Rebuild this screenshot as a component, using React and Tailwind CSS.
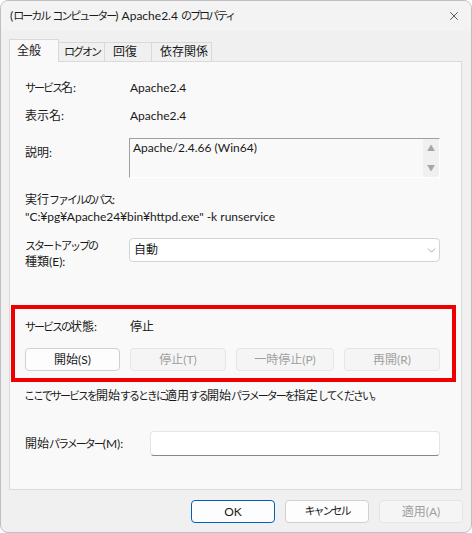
import { ChevronDown, X } from "lucide-react";

// Yu Gothic UI has narrow kana; Noto CJK's are full width, so tighten kana runs
const jp = (s) =>
  s.split(/([\u3040-\u30ff]+|¥)/).map((p, i) =>
    /^[\u3040-\u30ff]+$/.test(p) ? (
      <span key={i} className="text-[11px] tracking-[-2px]">
        {p}
      </span>
    ) : p === "¥" ? (
      <span key={i} className="font-['Liberation_Sans',sans-serif]">
        ¥
      </span>
    ) : (
      p
    )
  );

const Tab = ({ label, active, w, pl }) => (
  <div
    className={
      "whitespace-nowrap " +
      (active
        ? "relative z-10 -mb-px h-[23px] border border-b-0 border-[#d9d9d9] bg-[#f9f9f9] leading-[22px]"
        : "mt-[3px] h-[19px] border border-l-0 border-b-0 border-[#d9d9d9] bg-[#f0f0f0] leading-[18px]")
    }
    style={{ width: w, paddingLeft: pl }}
  >
    {jp(label)}
  </div>
);

const Btn = ({ label, w, disabled, primary }) => (
  <div
    className={
      "flex h-[23px] items-center justify-center whitespace-nowrap rounded-[4px] border " +
      (disabled
        ? "border-[#e5e5e5] bg-[#f5f5f5] text-[#a0a0a0]"
        : primary
        ? "border-[#005fb8] bg-[#fdfdfd] text-[#1a1a1a]"
        : "border-[#d0d0d0] bg-[#fdfdfd] text-[#1a1a1a]")
    }
    style={{ width: w }}
  >
    {jp(label)}
  </div>
);

export default function App() {
  return (
    <div className="h-[533px] w-[472px] overflow-hidden rounded-lg border border-[#bfbfbf] bg-[#f0f0f0] font-['Lato','Noto_Sans_CJK_JP',sans-serif] text-[12px] text-[#1a1a1a]">
      {/* title bar */}
      <div className="flex h-[30px] items-center justify-between bg-[#f3f3f3] pl-[9px] pr-[10px]">
        <span className="whitespace-nowrap">{jp("(ローカル コンピューター) Apache2.4 のプロパティ")}</span>
        <X size={14} strokeWidth={1.2} className="text-[#1a1a1a]" />
      </div>

      <div className="px-[8px] pt-[8px]">
        {/* tabs */}
        <div className="flex h-[22px] items-end">
          <Tab label="全般" active w={50} pl={7} />
          <Tab label="ログオン" w={46} pl={5} />
          <Tab label="回復" w={47} pl={8} />
          <Tab label="依存関係" w={60} pl={8} />
        </div>

        {/* panel */}
        <div className="h-[429px] w-[453px] border border-[#dadada] bg-[#f9f9f9]">
          <div className="pl-[15px]">
            <div className="mt-[16px] flex h-[20px] items-center">
              <span className="w-[105px]">{jp("サービス名:")}</span>
              <span>Apache2.4</span>
            </div>
            <div className="mt-[8px] flex h-[20px] items-center">
              <span className="w-[105px]">表示名:</span>
              <span>Apache2.4</span>
            </div>
            <div className="mt-[12px] flex">
              <span className="w-[104px] pt-[5px] leading-[20px]">説明:</span>
              <div className="flex h-[40px] w-[311px] border border-t-[#a0a0a0] border-l-[#a0a0a0] border-r-white border-b-white bg-[#f9f9f9]">
                <div className="flex-1 pl-[3px] leading-[17px]">Apache/2.4.66 (Win64)</div>
                <div className="flex w-[16px] flex-col items-center justify-between bg-[#f0f0f0] py-[4px] text-[8px] leading-[10px] text-[#a6a6a6]">
                  <span>▲</span>
                  <span>▼</span>
                </div>
              </div>
            </div>
            <div className="mt-[13px] leading-[17px]">
              <div>{jp("実行ファイルのパス:")}</div>
              <div>{jp('"C:¥pg¥Apache24¥bin¥httpd.exe" -k runservice')}</div>
            </div>
            <div className="mt-[12px] flex">
              <div className="w-[104px] leading-[16px]">
                <div>{jp("スタートアップの")}</div>
                <div>種類(E):</div>
              </div>
              <div className="flex h-[24px] w-[311px] items-center justify-between rounded-[4px] border border-[#d4d4d4] bg-white pl-[4px] pr-[1px]">
                <span>自動</span>
                <ChevronDown size={13} strokeWidth={1} className="text-[#5f5f5f]" />
              </div>
            </div>
          </div>

          {/* highlighted status block */}
          <div className="ml-[1px] mt-[35px] h-[77px] w-[445px] border-[4px] border-[#ee0000] pl-[10px] pt-[8px]">
            <div className="flex h-[20px] items-center">
              <span className="w-[105px]">{jp("サービスの状態:")}</span>
              <span>停止</span>
            </div>
            <div className="mt-[11px] flex gap-[10px]">
              <Btn w={95} label="開始(S)" />
              <Btn w={96} label="停止(T)" disabled />
              <Btn w={98} label="一時停止(P)" disabled />
              <Btn w={96} label="再開(R)" disabled />
            </div>
          </div>

          <div className="mt-[4px] pl-[14px] leading-[20px]">
            {jp("ここでサービスを開始するときに適用する開始パラメーターを指定してください。")}
          </div>

          <div className="mt-[25px] flex items-center pl-[15px]">
            <span className="w-[125px]">{jp("開始パラメーター(M):")}</span>
            <div className="h-[25px] w-[290px] rounded-[4px] border border-[#e5e5e5] border-b-[#868686] bg-white" />
          </div>
        </div>

        {/* dialog buttons */}
        <div className="mt-[10px] flex justify-end gap-[10px]">
          <Btn w={84} label="OK" primary />
          <Btn w={84} label="キャンセル" />
          <Btn w={84} label="適用(A)" disabled />
        </div>
      </div>
    </div>
  );
}
